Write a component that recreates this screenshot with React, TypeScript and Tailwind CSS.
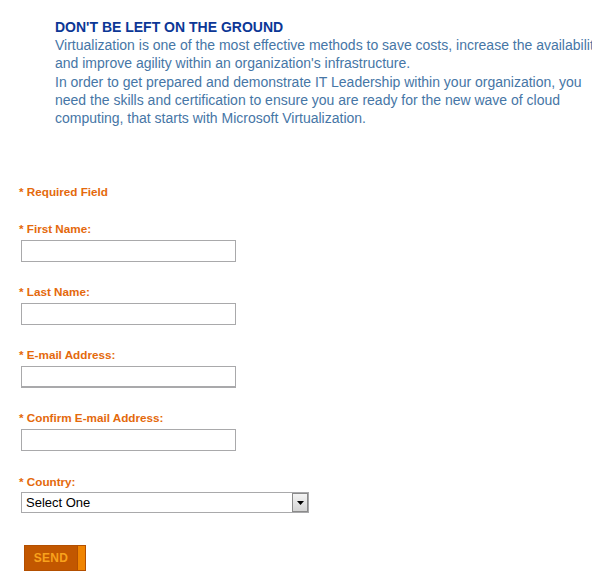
import React from 'react';

const labelCls = "block text-[11.7px] leading-[14px] font-bold text-[#e4690c]";
const inputCls = "ml-[2px] block w-[215px] h-[22px] border border-[#a9a9ab] bg-white px-1 text-[13px] outline-none";

const Field: React.FC<{ label: string; inputClass?: string }> = ({ label, inputClass }) => (
  <div className="mt-[23px]">
    <label className={labelCls}>* {label}</label>
    <input type="text" className={`${inputCls} mt-[4px] ${inputClass ?? ''}`} />
  </div>
);

const App: React.FC = () => {
  return (
    <div className="w-[592px] h-[585px] overflow-hidden bg-white font-['Liberation_Sans',Arial,sans-serif]">
      <div className="pl-[55px] pt-[19px] w-[613px]">
        <h2 className="text-[14px] leading-[17px] font-bold text-[#0c3796]">DON'T BE LEFT ON THE GROUND</h2>
        <p className="text-[14px] leading-[18px] text-[#4676a6]">
          Virtualization is one of the most effective methods to save costs, increase the availability and improve agility within an organization's infrastructure.
        </p>
        <p className="mt-px text-[14px] leading-[18px] text-[#4676a6]">
          In order to get prepared and demonstrate IT Leadership within your organization, you need the skills and certification to ensure you are ready for the new wave of cloud computing, that starts with Microsoft Virtualization.
        </p>
      </div>

      <form className="pl-[19px] mt-[58px]" onSubmit={(e) => e.preventDefault()}>
        <p className={labelCls}>* Required Field</p>
        <Field label="First Name:" />
        <Field label="Last Name:" />
        <Field label="E-mail Address:" inputClass="border-b-2" />
        <Field label="Confirm E-mail Address:" />
        <div className="mt-[24px]">
          <label className={labelCls}>* Country:</label>
          <div className="relative ml-[2px] mt-[3px] w-[288px] h-[21px]">
            <select className="block w-full h-full appearance-none border border-[#a9a9ab] bg-white pl-[4px] text-[13px] leading-[19px] text-black outline-none">
              <option>Select One</option>
            </select>
            <div className="pointer-events-none absolute right-[1px] top-[1px] flex h-[19px] w-[16px] items-center justify-center border border-[#8a8a8a] bg-gradient-to-b from-[#f4f4f4] to-[#d4d4d4]">
              <svg width="7" height="4" viewBox="0 0 7 4"><path d="M0 0h7L3.5 4z" fill="#000" /></svg>
            </div>
          </div>
        </div>
        <button type="submit" className="mt-[32px] ml-[5px] flex h-[26px] w-[62px] border border-[#b34f00] bg-[#c25700]">
          <span className="flex-1 text-center text-[12px] leading-[24px] font-bold tracking-wide text-[#f9a21c]">SEND</span>
          <span className="w-[8px] h-full bg-[#f08400] border-l border-[#b34f00]" />
        </button>
      </form>
    </div>
  );
};

export default App;
